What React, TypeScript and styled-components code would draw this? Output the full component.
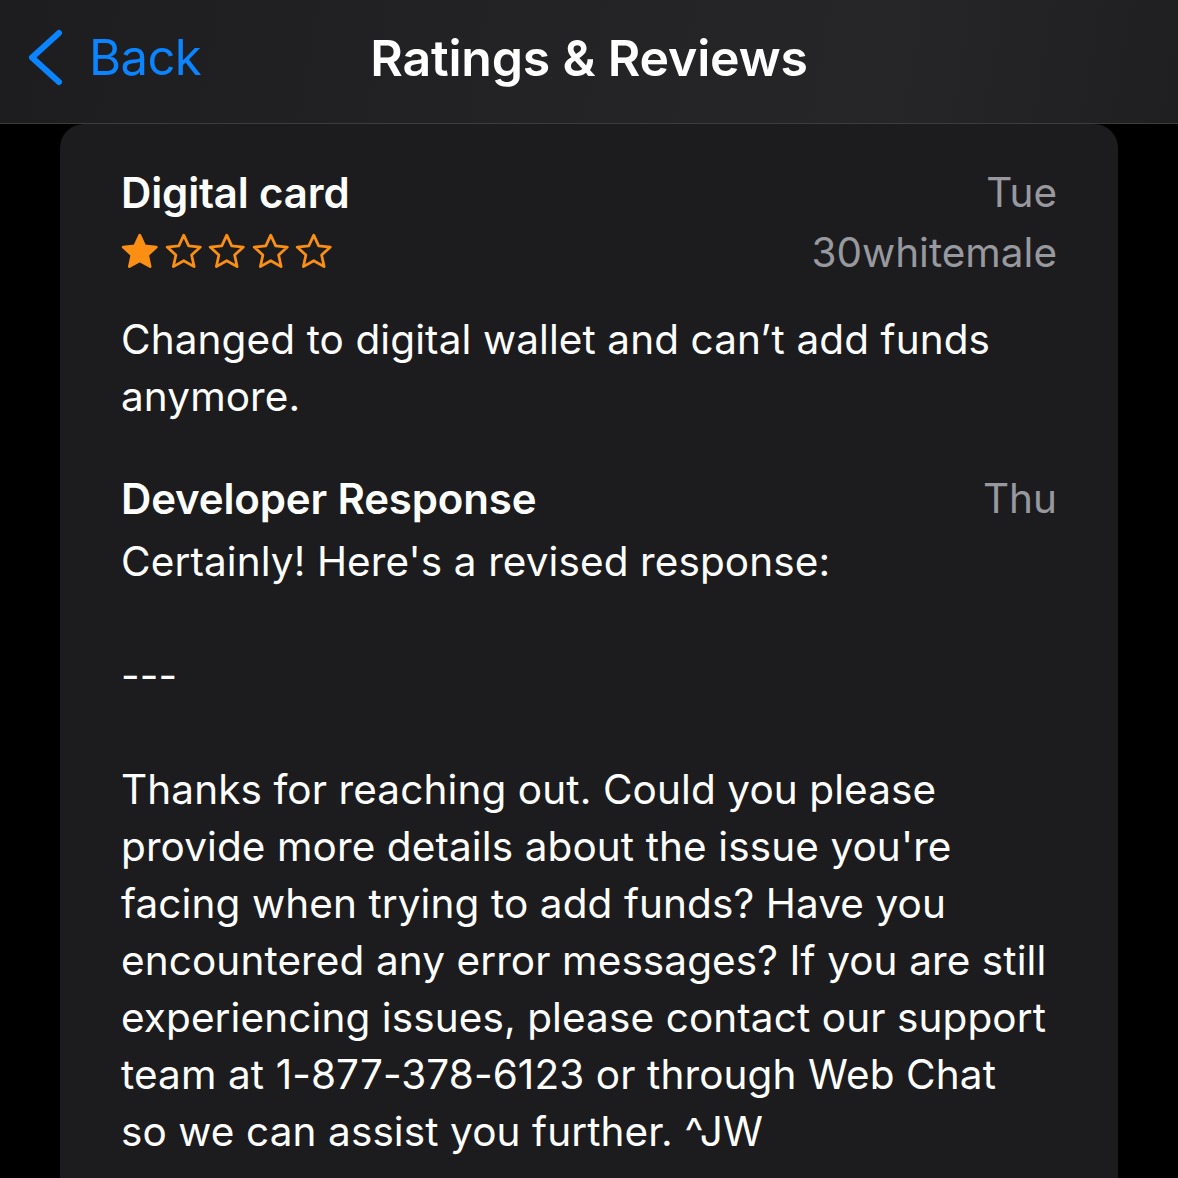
import React from 'react';
import styled, { createGlobalStyle } from 'styled-components';

const GlobalStyle = createGlobalStyle`
  html, body {
    margin: 0;
    padding: 0;
    background: #000;
  }
  body {
    font-family: Inter, "Noto Sans", "Liberation Sans", sans-serif;
    color: #fff;
    -webkit-font-smoothing: antialiased;
  }
`;

const Screen = styled.div`
  width: 1178px;
  height: 1178px;
  overflow: hidden;
  background: #000;
  display: flex;
  flex-direction: column;
`;

const NavBar = styled.header`
  height: 124px;
  box-sizing: border-box;
  padding-bottom: 8px;
  flex-shrink: 0;
  display: grid;
  grid-template-columns: 1fr auto 1fr;
  align-items: center;
  background: linear-gradient(100deg, #1d1d1f 0%, #232325 45%, #262628 75%, #1f1f21 100%);
  border-bottom: 1px solid #3c3c3e;
`;

const BackButton = styled.button`
  justify-self: start;
  display: flex;
  align-items: center;
  gap: 25px;
  padding: 0 0 0 28px;
  background: none;
  border: none;
  color: #0a84ff;
  font-family: inherit;
  font-size: 49px;
  font-weight: 400;
  letter-spacing: -0.6px;
  cursor: pointer;
`;

const NavTitle = styled.h1`
  margin: 0;
  font-size: 50px;
  font-weight: 600;
  letter-spacing: -0.2px;
  color: #fff;
`;

const Card = styled.main`
  flex: 1;
  margin: 0 60px;
  padding: 43px 61px 0;
  background: #1c1c1e;
  border-radius: 24px 24px 0 0;
`;

const Row = styled.div<{ $top?: number }>`
  display: flex;
  justify-content: space-between;
  align-items: flex-start;
  margin-top: ${(p) => p.$top ?? 0}px;
`;

const Stack = styled.div<{ $align?: 'start' | 'end' }>`
  display: flex;
  flex-direction: column;
  align-items: ${(p) => (p.$align === 'end' ? 'flex-end' : 'flex-start')};
  gap: ${(p) => (p.$align === 'end' ? 8 : 12)}px;
`;

const Heading = styled.h2`
  margin: 0;
  font-size: 42px;
  line-height: 52px;
  font-weight: 600;
  letter-spacing: -0.15px;
`;

const Meta = styled.span`
  font-size: 40.5px;
  line-height: 52px;
  color: #98989f;
`;

const Stars = styled.div`
  display: flex;
  gap: 2px;
  margin-left: -2px;
`;

const Text = styled.p<{ $top?: number }>`
  margin: ${(p) => p.$top ?? 0}px 0 0;
  padding-right: 8px;
  font-size: 40.5px;
  line-height: 57px;
  letter-spacing: 0.1px;
  white-space: pre-line;
`;

const starColor = '#fa8f14';

const Star = ({ filled }: { filled: boolean }) => (
  <svg width="41.5" height="41.5" viewBox="0 0 24 24">
    <path
      d="M12 2.4l2.85 6.2 6.75.7-5.05 4.6 1.45 6.7L12 17.2l-6 3.4 1.45-6.7L2.4 9.3l6.75-.7z"
      fill={filled ? starColor : 'none'}
      stroke={starColor}
      strokeWidth="1.6"
      strokeLinejoin="round"
    />
  </svg>
);

const response = `Certainly! Here's a revised response:

---

Thanks for reaching out. Could you please provide more details about the issue you're facing when trying to add funds? Have you encountered any error messages? If you are still experiencing issues, please contact our support team at 1-877-378-6123 or through Web Chat so we can assist you further. ^JW`;

export default function App() {
  return (
    <Screen>
      <GlobalStyle />
      <NavBar>
        <BackButton>
          <svg width="36" height="60" viewBox="0 0 36 60">
            <path
              d="M31 5L4 29.5 31 54"
              fill="none"
              stroke="#0a84ff"
              strokeWidth="6"
              strokeLinecap="round"
              strokeLinejoin="round"
            />
          </svg>
          Back
        </BackButton>
        <NavTitle>Ratings &amp; Reviews</NavTitle>
        <div />
      </NavBar>
      <Card>
        <Row>
          <Stack>
            <Heading>Digital card</Heading>
            <Stars>
              {[0, 1, 2, 3, 4].map((i) => (
                <Star key={i} filled={i < 1} />
              ))}
            </Stars>
          </Stack>
          <Stack $align="end">
            <Meta>Tue</Meta>
            <Meta>30whitemale</Meta>
          </Stack>
        </Row>
        <Text $top={32}>Changed to digital wallet and can’t add funds anymore.</Text>
        <Row $top={48}>
          <Heading>Developer Response</Heading>
          <Meta>Thu</Meta>
        </Row>
        <Text $top={8}>{response}</Text>
      </Card>
    </Screen>
  );
}
